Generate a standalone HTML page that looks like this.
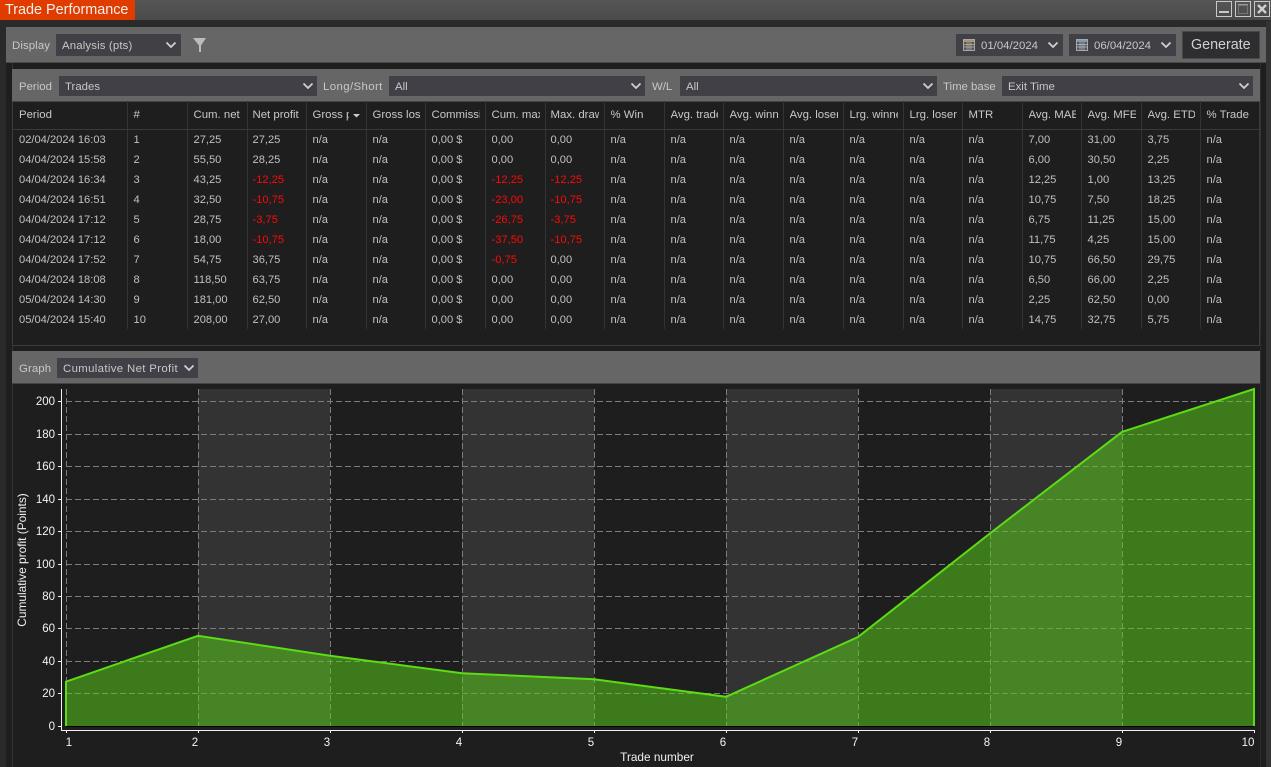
<!DOCTYPE html>
<html><head><meta charset="utf-8"><style>
html,body{margin:0;padding:0;background:#1e1e1e}
#p{position:relative;width:1271px;height:767px;overflow:hidden;background:#1e1e1e;font-family:"Liberation Sans",sans-serif;font-size:11.4px;color:#c8c8c8}
.a{position:absolute;box-sizing:border-box}
.t{position:absolute;white-space:nowrap;line-height:14px}
.s{position:absolute;background:#404046;box-sizing:border-box;color:#c8c8c8;white-space:nowrap}
.s span{position:absolute;left:6px;top:50%;margin-top:-6px;line-height:14px}
.s svg{position:absolute;right:4px;top:50%;margin-top:-5px}
table{position:absolute;left:13px;top:101px;width:1247px;border-collapse:collapse;table-layout:fixed}
th,td{padding:1px 0 0 6px;text-align:left;font-weight:normal;white-space:nowrap;overflow:hidden;border-right:1px solid #333;box-sizing:border-box}
th{height:28px;border-bottom:1px solid #3a3a3a;color:#c8c8c8}
th div{overflow:hidden;margin-right:5px}
td{height:20px;color:#c0c0c0;font-size:11.15px}
td.r{color:#ff0808}
th:nth-child(4),td:nth-child(4),th:nth-child(9),td:nth-child(9){padding-left:5px}
</style></head><body><div id="p">
<!-- title bar -->
<div class="a" style="left:0;top:0;width:1271px;height:20px;background:linear-gradient(#565656,#4a4a4a)"></div>
<div class="a" style="left:0;top:20px;width:1271px;height:7px;background:#2a2a2a"></div>
<div class="a" style="left:0;top:0;width:135px;height:20px;background:#e03c00"></div>
<div class="t" style="left:5px;top:1px;font-size:14.4px;line-height:18px;color:#f4f0ee">Trade Performance</div>
<svg class="a" style="left:1210px;top:0" width="61" height="20">
<rect x="6.5" y="1.5" width="15" height="15" fill="none" stroke="#c8c8c8"/><rect x="9" y="11" width="10" height="2" fill="#c8c8c8"/>
<rect x="25.5" y="1.5" width="15" height="15" fill="none" stroke="#c8c8c8"/><rect x="28" y="4" width="10" height="1.500" fill="#999"/><rect x="28.500" y="5.500" width="9" height="8" fill="none" stroke="#777" stroke-width="1"/>
<rect x="44.5" y="1.5" width="15" height="15" fill="none" stroke="#c8c8c8"/><path d="M48 5l8 8M56 5l-8 8" stroke="#d0d0d0" stroke-width="2.400"/>
</svg>
<!-- frame -->
<div class="a" style="left:0;top:21px;width:6px;height:746px;background:#2a2a2a"></div>
<div class="a" style="left:1266px;top:21px;width:5px;height:746px;background:#333"></div>
<div class="a" style="left:1260px;top:63px;width:1px;height:704px;background:#2c2c2c"></div>
<div class="a" style="left:12px;top:62px;width:1px;height:705px;background:#333"></div>
<!-- toolbar -->
<div class="a" style="left:6px;top:27px;width:1260px;height:36px;background:#666;border-bottom:1px solid #4a4a4a"></div>
<div class="t" style="left:12px;top:39px;letter-spacing:.1px">Display</div>
<div class="s" style="left:56px;top:34px;width:125px;height:22px"><span style="letter-spacing:.15px">Analysis (pts)</span><svg width="12" height="10"><path d="M1.5 2.5l4.5 4.5 4.5-4.5" fill="none" stroke="#d0d0d0" stroke-width="1.8"/></svg></div>
<svg class="a" style="left:192px;top:37px" width="16" height="17"><path d="M1 1h13L9 8.500V15H7V8.500z" fill="#bcbcbc"/></svg>
<div class="s" style="left:956px;top:34px;width:107px;height:22px"><svg style="left:7px;right:auto;margin-top:-6px" width="12" height="12"><rect x=".5" y=".5" width="11" height="11" fill="#555" stroke="#a8a8a8"/><rect x="1" y="1" width="10" height="2" fill="#a89478"/><path d="M1 5.500h10M1 8h10M4 3v8M6 3v8M8 3v8" stroke="#bdb5a5" stroke-width=".7"/></svg><span style="left:25px">01/04/2024</span><svg width="12" height="10"><path d="M1.500 2.500l4.500 4.500 4.500-4.500" fill="none" stroke="#d0d0d0" stroke-width="1.800"/></svg></div>
<div class="s" style="left:1069px;top:34px;width:107px;height:22px"><svg style="left:7px;right:auto;margin-top:-6px" width="12" height="12"><rect x=".5" y=".5" width="11" height="11" fill="#555" stroke="#a8a8a8"/><rect x="1" y="1" width="10" height="2" fill="#8098b8"/><path d="M1 5.500h10M1 8h10M4 3v8M6 3v8M8 3v8" stroke="#b5c0d0" stroke-width=".7"/></svg><span style="left:25px">06/04/2024</span><svg width="12" height="10"><path d="M1.500 2.500l4.500 4.500 4.500-4.500" fill="none" stroke="#d0d0d0" stroke-width="1.800"/></svg></div>
<div class="a" style="left:1182px;top:31px;width:78px;height:28px;background:#2e2e30;border:1px solid #484848"></div>
<div class="t" style="left:1191px;top:37px;font-size:14.300px;line-height:16px;color:#d0d0d0">Generate</div>
<!-- panel 1 -->
<div class="a" style="left:12px;top:69px;width:1248px;height:277px;border:1px solid #3c3c3c;border-top:none"></div>
<div class="a" style="left:12px;top:69px;width:1248px;height:33px;background:#666;border-bottom:1px solid #444"></div>
<div class="t" style="left:19px;top:80px">Period</div>
<div class="s" style="left:59px;top:76px;width:258px;height:20px"><span>Trades</span><svg style="right:3px" width="12" height="10"><path d="M1.500 2.500l4.500 4.500 4.500-4.500" fill="none" stroke="#d0d0d0" stroke-width="1.800"/></svg></div>
<div class="t" style="left:323px;top:80px;letter-spacing:.4px">Long/Short</div>
<div class="s" style="left:389px;top:76px;width:256px;height:20px"><span>All</span><svg style="right:3px" width="12" height="10"><path d="M1.500 2.500l4.500 4.500 4.500-4.500" fill="none" stroke="#d0d0d0" stroke-width="1.800"/></svg></div>
<div class="t" style="left:652px;top:80px">W/L</div>
<div class="s" style="left:680px;top:76px;width:257px;height:20px"><span>All</span><svg style="right:3px" width="12" height="10"><path d="M1.500 2.500l4.500 4.500 4.500-4.500" fill="none" stroke="#d0d0d0" stroke-width="1.800"/></svg></div>
<div class="t" style="left:943px;top:80px">Time base</div>
<div class="s" style="left:1002px;top:76px;width:251px;height:20px"><span>Exit Time</span><svg style="right:3px" width="12" height="10"><path d="M1.500 2.500l4.500 4.500 4.500-4.500" fill="none" stroke="#d0d0d0" stroke-width="1.800"/></svg></div>
<table>
<colgroup><col style="width:114px"><col style="width:60px"><col style="width:60px"><col style="width:59px"><col style="width:60px"><col style="width:59px"><col style="width:60px"><col style="width:60px"><col style="width:59px"><col style="width:60px"><col style="width:59px"><col style="width:60px"><col style="width:60px"><col style="width:60px"><col style="width:59px"><col style="width:60px"><col style="width:59px"><col style="width:60px"><col style="width:59px"><col style="width:60px"></colgroup>
<tr><th>Period</th><th>#</th><th><div>Cum. net profit</div></th><th><div>Net profit</div></th><th><div style="margin-right:17px">Gross profit</div></th><th><div>Gross loss</div></th><th><div>Commission</div></th><th><div>Cum. max</div></th><th><div>Max. drawdown</div></th><th>% Win</th><th><div>Avg. trade</div></th><th><div>Avg. winner</div></th><th><div>Avg. loser</div></th><th><div>Lrg. winner</div></th><th><div>Lrg. loser</div></th><th>MTR</th><th><div>Avg. MAE</div></th><th><div>Avg. MFE</div></th><th><div>Avg. ETD</div></th><th>% Trade</th></tr>
<tr><td>02/04/2024 16:03</td><td>1</td><td>27,25</td><td>27,25</td><td>n/a</td><td>n/a</td><td>0,00 $</td><td>0,00</td><td>0,00</td><td>n/a</td><td>n/a</td><td>n/a</td><td>n/a</td><td>n/a</td><td>n/a</td><td>n/a</td><td>7,00</td><td>31,00</td><td>3,75</td><td>n/a</td></tr>
<tr><td>04/04/2024 15:58</td><td>2</td><td>55,50</td><td>28,25</td><td>n/a</td><td>n/a</td><td>0,00 $</td><td>0,00</td><td>0,00</td><td>n/a</td><td>n/a</td><td>n/a</td><td>n/a</td><td>n/a</td><td>n/a</td><td>n/a</td><td>6,00</td><td>30,50</td><td>2,25</td><td>n/a</td></tr>
<tr><td>04/04/2024 16:34</td><td>3</td><td>43,25</td><td class="r">-12,25</td><td>n/a</td><td>n/a</td><td>0,00 $</td><td class="r">-12,25</td><td class="r">-12,25</td><td>n/a</td><td>n/a</td><td>n/a</td><td>n/a</td><td>n/a</td><td>n/a</td><td>n/a</td><td>12,25</td><td>1,00</td><td>13,25</td><td>n/a</td></tr>
<tr><td>04/04/2024 16:51</td><td>4</td><td>32,50</td><td class="r">-10,75</td><td>n/a</td><td>n/a</td><td>0,00 $</td><td class="r">-23,00</td><td class="r">-10,75</td><td>n/a</td><td>n/a</td><td>n/a</td><td>n/a</td><td>n/a</td><td>n/a</td><td>n/a</td><td>10,75</td><td>7,50</td><td>18,25</td><td>n/a</td></tr>
<tr><td>04/04/2024 17:12</td><td>5</td><td>28,75</td><td class="r">-3,75</td><td>n/a</td><td>n/a</td><td>0,00 $</td><td class="r">-26,75</td><td class="r">-3,75</td><td>n/a</td><td>n/a</td><td>n/a</td><td>n/a</td><td>n/a</td><td>n/a</td><td>n/a</td><td>6,75</td><td>11,25</td><td>15,00</td><td>n/a</td></tr>
<tr><td>04/04/2024 17:12</td><td>6</td><td>18,00</td><td class="r">-10,75</td><td>n/a</td><td>n/a</td><td>0,00 $</td><td class="r">-37,50</td><td class="r">-10,75</td><td>n/a</td><td>n/a</td><td>n/a</td><td>n/a</td><td>n/a</td><td>n/a</td><td>n/a</td><td>11,75</td><td>4,25</td><td>15,00</td><td>n/a</td></tr>
<tr><td>04/04/2024 17:52</td><td>7</td><td>54,75</td><td>36,75</td><td>n/a</td><td>n/a</td><td>0,00 $</td><td class="r">-0,75</td><td>0,00</td><td>n/a</td><td>n/a</td><td>n/a</td><td>n/a</td><td>n/a</td><td>n/a</td><td>n/a</td><td>10,75</td><td>66,50</td><td>29,75</td><td>n/a</td></tr>
<tr><td>04/04/2024 18:08</td><td>8</td><td>118,50</td><td>63,75</td><td>n/a</td><td>n/a</td><td>0,00 $</td><td>0,00</td><td>0,00</td><td>n/a</td><td>n/a</td><td>n/a</td><td>n/a</td><td>n/a</td><td>n/a</td><td>n/a</td><td>6,50</td><td>66,00</td><td>2,25</td><td>n/a</td></tr>
<tr><td>05/04/2024 14:30</td><td>9</td><td>181,00</td><td>62,50</td><td>n/a</td><td>n/a</td><td>0,00 $</td><td>0,00</td><td>0,00</td><td>n/a</td><td>n/a</td><td>n/a</td><td>n/a</td><td>n/a</td><td>n/a</td><td>n/a</td><td>2,25</td><td>62,50</td><td>0,00</td><td>n/a</td></tr>
<tr><td>05/04/2024 15:40</td><td>10</td><td>208,00</td><td>27,00</td><td>n/a</td><td>n/a</td><td>0,00 $</td><td>0,00</td><td>0,00</td><td>n/a</td><td>n/a</td><td>n/a</td><td>n/a</td><td>n/a</td><td>n/a</td><td>n/a</td><td>14,75</td><td>32,75</td><td>5,75</td><td>n/a</td></tr>
</table>
<svg class="a" style="left:353px;top:113px" width="8" height="6"><path d="M0 1h7L3.500 4.500z" fill="#ccc"/></svg>
<!-- panel 2 -->
<div class="a" style="left:12px;top:351px;width:1248px;height:33px;background:#666;border-bottom:1px solid #444"></div>
<div class="t" style="left:19px;top:362px;letter-spacing:.1px">Graph</div>
<div class="s" style="left:57px;top:358px;width:141px;height:20px"><span style="letter-spacing:.35px">Cumulative Net Profit</span><svg style="right:3px" width="12" height="10"><path d="M1.500 2.500l4.500 4.500 4.500-4.500" fill="none" stroke="#d0d0d0" stroke-width="1.800"/></svg></div>
<svg class="a" style="left:0;top:0" width="1271" height="767" font-family="Liberation Sans, sans-serif">
<g fill="#333"><rect x="198" y="389" width="132" height="337"/><rect x="462" y="389" width="132" height="337"/><rect x="726" y="389" width="132" height="337"/><rect x="990" y="389" width="132" height="337"/></g>
<g stroke="#7c7c7c" stroke-width="1" stroke-dasharray="6 3" fill="none">
<path d="M66 401.500H1254M66 434.500H1254M66 466.500H1254M66 499.500H1254M66 531.500H1254M66 564.500H1254M66 596.500H1254M66 628.500H1254M66 661.500H1254M66 693.500H1254"/>
<path d="M66.500 389V726M198.500 389V726M330.500 389V726M462.500 389V726M594.500 389V726M726.500 389V726M858.500 389V726M990.500 389V726M1122.500 389V726M1254.500 389V726"/>
</g>
<path d="M66 726V681.700L198 635.800 330 655.700 462 673.200 594 679.300 726 696.800 858 637 990 533.400 1122 431.900 1254 388V726z" fill="rgb(91,207,26)" fill-opacity=".52"/>
<path d="M66 726V681.700L198 635.800 330 655.700 462 673.200 594 679.300 726 696.800 858 637 990 533.400 1122 431.900 1254 389V726" fill="none" stroke="#5bdc14" stroke-width="2"/>
<path d="M66 726.500H1254" stroke="#000" stroke-width="1"/>
<path d="M61.500 389V730.500H1254.500M58 401.500h3.500M58 434.500h3.500M58 466.500h3.500M58 499.500h3.500M58 531.500h3.500M58 564.500h3.500M58 596.500h3.500M58 628.500h3.500M58 661.500h3.500M58 693.500h3.500M58 726.500h3.500M66.500 730v3M198.500 730v3M330.500 730v3M462.500 730v3M594.500 730v3M726.500 730v3M858.500 730v3M990.500 730v3M1122.500 730v3M1254.500 730v3" fill="none" stroke="#f0f0f0" stroke-width="1"/>
<g fill="#f0f4f8" font-size="11.500" text-anchor="end">
<text x="55" y="405">200</text><text x="55" y="438">180</text><text x="55" y="470">160</text><text x="55" y="503">140</text><text x="55" y="535">120</text><text x="55" y="568">100</text><text x="55" y="600">80</text><text x="55" y="632">60</text><text x="55" y="665">40</text><text x="55" y="697">20</text><text x="55" y="730">0</text>
</g>
<g fill="#f0f4f8" font-size="11.500" text-anchor="middle">
<text x="69" y="746">1</text><text x="195" y="746">2</text><text x="327" y="746">3</text><text x="459" y="746">4</text><text x="591" y="746">5</text><text x="723" y="746">6</text><text x="855" y="746">7</text><text x="987" y="746">8</text><text x="1119" y="746">9</text><text x="1248" y="746">10</text>
</g>
<text x="657" y="761" fill="#f0f0f0" font-size="11.800" text-anchor="middle">Trade number</text>
<text transform="translate(26 560) rotate(-90)" fill="#f0f0f0" font-size="11.900" text-anchor="middle">Cumulative profit (Points)</text>
</svg>
</div></body></html>
